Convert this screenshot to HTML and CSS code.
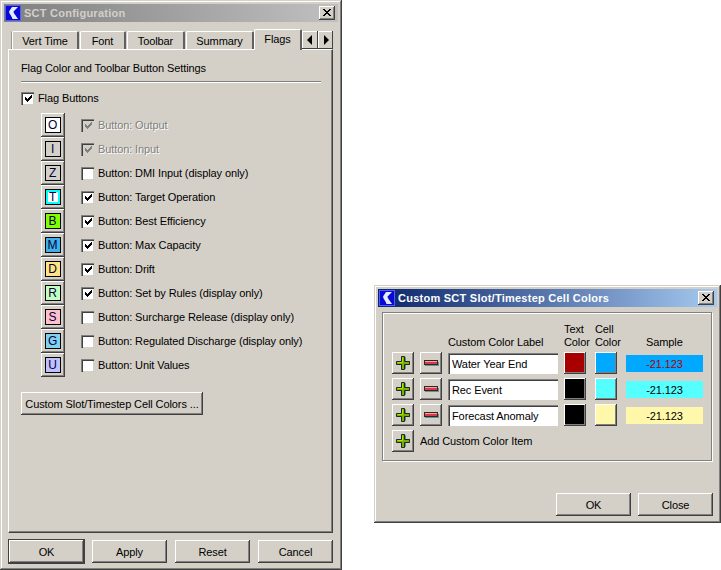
FILE: index.html
```html
<!DOCTYPE html>
<html lang="en">
<head>
<meta charset="utf-8">
<title>SCT Configuration</title>
<link rel="stylesheet" href="styles.css">
</head>
<body>
<svg class="defs" width="0" height="0" aria-hidden="true">
  <symbol id="logo" viewBox="0 0 16 16">
    <rect width="16" height="16" fill="#0808d8"/>
    <rect x="0.500" y="0.500" width="15" height="15" fill="none" stroke="#5060f0"/>
    <path d="M7 2h6L8.500 6.500c0 2 2.500 4 4.500 7.500H7.500C7 11 4 9 4 6.500z" fill="#e4ecff"/>
  </symbol>
  <symbol id="check" viewBox="0 0 9 9">
    <path d="M1 3h1v1h1v1h1V4h1V3h1V2h1V1h1v3H7v1H6v1H5v1H4v1H3V7H2V6H1z" fill="currentColor" shape-rendering="crispEdges"/>
  </symbol>
  <symbol id="close" viewBox="0 0 10 10">
    <path d="M1 1l7 7M8 1L1 8M2 1l7 7M9 1L2 8" stroke="#000" stroke-width="1" fill="none"/>
  </symbol>
  <symbol id="plus" viewBox="0 0 18 18">
    <path d="M8.500 3.500h3v4h4v3h-4v4h-3v-4h-4v-3h4z" fill="#5a8c8c" stroke="#5a8c8c"/>
    <path d="M7.500 2.500h3v5h5v3h-5v5h-3v-5h-5v-3h5z" fill="#7ab000" stroke="#1c2a20" stroke-width="1"/>
    <path d="M8.500 3.500v5h-5" fill="none" stroke="#b0e800" stroke-width="1"/>
  </symbol>
  <symbol id="minus" viewBox="0 0 18 18">
    <rect x="3" y="8" width="14" height="4" fill="#6a9090"/>
    <rect x="2.500" y="6.500" width="13" height="4" fill="#e03840" stroke="#282830" stroke-width="1"/>
    <rect x="3" y="7" width="12" height="1" fill="#ffa0a0"/>
  </symbol>
  <symbol id="left" viewBox="0 0 8 10"><path d="M6 0v10L1 5z" fill="#000"/></symbol>
  <symbol id="right" viewBox="0 0 8 10"><path d="M2 0v10l5-5z" fill="#000"/></symbol>
</svg>

<section class="window config">
  <header class="titlebar inactive">
    <svg class="logo"><use href="#logo"/></svg>
    <span class="title">SCT Configuration</span>
    <button class="close"><svg><use href="#close"/></svg></button>
  </header>
  <div class="tabstrip">
    <span class="tab clip"></span>
    <span class="tab vert">Vert Time</span>
    <span class="tab font">Font</span>
    <span class="tab toolbar">Toolbar</span>
    <span class="tab summary">Summary</span>
    <span class="tab active">Flags</span>
    <span class="arrow first"><svg><use href="#left"/></svg></span>
    <span class="arrow"><svg><use href="#right"/></svg></span>
  </div>
  <div class="pane">
    <div class="heading">Flag Color and Toolbar Button Settings</div>
    <hr class="rule">
    <label class="check-line master"><span class="box"><svg><use href="#check"/></svg></span>Flag Buttons</label>
    <div class="flags">
      <div class="flag"><span class="fbtn"><span class="swatch c-o">O</span></span><label class="check-line off"><span class="box"><svg><use href="#check"/></svg></span>Button: Output</label></div>
      <div class="flag"><span class="fbtn"><span class="swatch c-i">I</span></span><label class="check-line off"><span class="box"><svg><use href="#check"/></svg></span>Button: Input</label></div>
      <div class="flag"><span class="fbtn"><span class="swatch c-z">Z</span></span><label class="check-line"><span class="box"></span>Button: DMI Input (display only)</label></div>
      <div class="flag"><span class="fbtn"><span class="swatch c-t">T</span></span><label class="check-line"><span class="box"><svg><use href="#check"/></svg></span>Button: Target Operation</label></div>
      <div class="flag"><span class="fbtn"><span class="swatch c-b">B</span></span><label class="check-line"><span class="box"><svg><use href="#check"/></svg></span>Button: Best Efficiency</label></div>
      <div class="flag"><span class="fbtn"><span class="swatch c-m">M</span></span><label class="check-line"><span class="box"><svg><use href="#check"/></svg></span>Button: Max Capacity</label></div>
      <div class="flag"><span class="fbtn"><span class="swatch c-d">D</span></span><label class="check-line"><span class="box"><svg><use href="#check"/></svg></span>Button: Drift</label></div>
      <div class="flag"><span class="fbtn"><span class="swatch c-r">R</span></span><label class="check-line"><span class="box"><svg><use href="#check"/></svg></span>Button: Set by Rules (display only)</label></div>
      <div class="flag"><span class="fbtn"><span class="swatch c-s">S</span></span><label class="check-line"><span class="box"></span>Button: Surcharge Release (display only)</label></div>
      <div class="flag"><span class="fbtn"><span class="swatch c-g">G</span></span><label class="check-line"><span class="box"></span>Button: Regulated Discharge (display only)</label></div>
      <div class="flag"><span class="fbtn"><span class="swatch c-u">U</span></span><label class="check-line"><span class="box"></span>Button: Unit Values</label></div>
    </div>
    <button class="btn custom">Custom Slot/Timestep Cell Colors ...</button>
  </div>
  <footer class="actions">
    <button class="btn wide default">OK</button>
    <button class="btn wide">Apply</button>
    <button class="btn wide">Reset</button>
    <button class="btn wide">Cancel</button>
  </footer>
</section>

<section class="window colors">
  <header class="titlebar">
    <svg class="logo"><use href="#logo"/></svg>
    <span class="title">Custom SCT Slot/Timestep Cell Colors</span>
    <button class="close"><svg><use href="#close"/></svg></button>
  </header>
  <div class="group">
    <div class="grid">
      <span class="hd hd-label">Custom Color Label</span>
      <span class="hd hd-text">Text Color</span>
      <span class="hd hd-cell">Cell Color</span>
      <span class="hd hd-sample">Sample</span>

      <button class="icon"><svg><use href="#plus"/></svg></button>
      <button class="icon"><svg><use href="#minus"/></svg></button>
      <input class="field" value="Water Year End">
      <span class="well red"></span>
      <span class="well blue"></span>
      <span class="sample s-blue">-21.123</span>

      <button class="icon"><svg><use href="#plus"/></svg></button>
      <button class="icon"><svg><use href="#minus"/></svg></button>
      <input class="field" value="Rec Event">
      <span class="well black"></span>
      <span class="well cyan"></span>
      <span class="sample s-cyan">-21.123</span>

      <button class="icon"><svg><use href="#plus"/></svg></button>
      <button class="icon"><svg><use href="#minus"/></svg></button>
      <input class="field" value="Forecast Anomaly">
      <span class="well black"></span>
      <span class="well cream"></span>
      <span class="sample s-cream">-21.123</span>

      <button class="icon"><svg><use href="#plus"/></svg></button>
      <span class="add">Add Custom Color Item</span>
    </div>
  </div>
  <footer class="colors-actions">
    <button class="btn dlg">OK</button>
    <button class="btn dlg">Close</button>
  </footer>
</section>
</body>
</html>
```
FILE: styles.css
```css
* { box-sizing: border-box; }
html, body { margin: 0; padding: 0; }
body {
  width: 721px;
  height: 570px;
  position: relative;
  overflow: hidden;
  background: #fff;
  font: 11px "Liberation Sans", Arial, sans-serif;
  letter-spacing: -0.1px;
  color: #000;
}
.defs { position: absolute; }
button { font: inherit; letter-spacing: inherit; color: inherit; padding: 0; margin: 0; }

.window {
  position: absolute;
  background: #d4d0c8;
  padding: 4px;
  display: flex;
  flex-direction: column;
  box-shadow: inset -1px -1px 0 #404040, inset 1px 1px 0 #d4d0c8, inset -2px -2px 0 #808080, inset 2px 2px 0 #fff;
}
.config { left: 0; top: 0; width: 342px; height: 570px; }
.colors { left: 374px; top: 285px; width: 347px; height: 238px; }

.titlebar {
  height: 18px;
  flex: none;
  display: flex;
  align-items: center;
  padding: 0 3px 0 1px;
  background: linear-gradient(90deg, #0a246a, #a6caf0);
  color: #fff;
  font-weight: bold;
  letter-spacing: 0.25px;
}
.titlebar.inactive { background: linear-gradient(90deg, #808080, #c0c0c0); color: #d4d0c8; }
.logo { width: 16px; height: 16px; flex: none; margin-right: 3px; }
.title { flex: 1; white-space: nowrap; }
.close {
  width: 16px;
  height: 14px;
  flex: none;
  border: 0;
  background: #d4d0c8;
  display: flex;
  align-items: center;
  justify-content: center;
  box-shadow: inset -1px -1px 0 #404040, inset 1px 1px 0 #fff, inset -2px -2px 0 #808080;
}
.close svg { width: 10px; height: 10px; }

.tabstrip {
  display: flex;
  align-items: flex-end;
  height: 27px;
  margin: 0 0 0 5px;
  flex: none;
  position: relative;
  z-index: 1;
}
.tab {
  height: 18px;
  display: flex;
  align-items: center;
  justify-content: center;
  white-space: nowrap;
  background: #d4d0c8;
  border-top: 1px solid #fff;
  border-left: 1px solid #fff;
  border-right: 2px solid #606060;
  margin-right: 1px;
  padding-top: 1px;
  border-radius: 2px 2px 0 0;
}
.clip { width: 3px; border-top: 0; border-left: 0; margin-right: 0; border-right: 1px dotted #606060; }
.vert { width: 67px; }
.font { width: 46px; }
.toolbar { width: 58px; }
.summary { width: 68px; margin-right: 0; }
.active {
  width: 48px;
  height: 21px;
  margin-bottom: -1px;
  padding: 0 0 3px;
  margin-right: 0;
}
.arrow {
  width: 15px;
  height: 18px;
  margin-bottom: 0;
  background: #d4d0c8;
  display: flex;
  align-items: center;
  justify-content: center;
  box-shadow: inset -1px -1px 0 #404040, inset 1px 1px 0 #fff;
}
.first { width: 16px; }
.arrow svg { width: 8px; height: 10px; }

.pane {
  height: 484px;
  flex: none;
  padding: 11px 12px 0;
  border-top: 1px solid #fff;
  border-left: 1px solid #fff;
  border-right: 1px solid #404040;
  border-bottom: 1px solid #404040;
  box-shadow: inset -1px -1px 0 #808080;
  margin: 0 5px 0 4px;
  display: flex;
  flex-direction: column;
}
.heading { height: 14px; line-height: 14px; }
.rule {
  width: 300px;
  height: 2px;
  margin: 6px 0 0;
  border: 0;
  border-top: 1px solid #808080;
  border-bottom: 1px solid #fff;
}
.check-line { display: flex; align-items: center; gap: 4px; white-space: nowrap; height: 14px; }
.master { margin-top: 8px; }
.box {
  width: 13px;
  height: 13px;
  flex: none;
  background: #fff;
  border-top: 1px solid #808080;
  border-left: 1px solid #808080;
  box-shadow: inset 1px 1px 0 #404040, inset -1px -1px 0 #d4d0c8;
  display: flex;
  align-items: center;
  justify-content: center;
  color: #000;
}
.box svg { width: 9px; height: 9px; }
.off { color: #808080; text-shadow: 1px 1px 0 #fff; }
.off .box { background: #d4d0c8; color: #808080; }

.flags { margin: 8px 0 0 20px; display: flex; flex-direction: column; }
.flag { display: flex; align-items: center; gap: 16px; height: 24px; }
.fbtn {
  width: 24px;
  height: 24px;
  flex: none;
  display: flex;
  align-items: center;
  justify-content: center;
  background: #d4d0c8;
  box-shadow: inset -1px -1px 0 #404040, inset 1px 1px 0 #fff, inset -2px -2px 0 #808080;
}
.swatch {
  width: 16px;
  height: 16px;
  border: 1px solid #000;
  font-size: 12px;
  line-height: 15px;
  text-align: center;
  color: #00003c;
  margin: 0 1px 1px 0;
  box-sizing: border-box;
}
.c-o { background: #fff; }
.c-i, .c-z { background: #d4d0c8; }
.c-t { background: #fff; box-shadow: inset 0 0 0 2px #00ffff; }
.c-b { background: #80ff00; }
.c-m { background: #40b0e8; }
.c-d { background: #ffe480; }
.c-r { background: #c0ffc0; }
.c-s { background: #ffc0cb; }
.c-g { background: #80d0f0; }
.c-u { background: #c0c0ff; }

.btn {
  height: 23px;
  border: 0;
  background: #d4d0c8;
  box-shadow: inset -1px -1px 0 #404040, inset 1px 1px 0 #fff, inset -2px -2px 0 #808080;
}
.custom { width: 182px; margin-top: 15px; }
.actions { display: flex; gap: 8px; margin: 7px 5px 0 4px; }
.wide { width: 75px; }
.default {
  margin-left: 1px;
  box-shadow: 0 0 0 1px #404040, inset -1px -1px 0 #404040, inset 1px 1px 0 #fff, inset -2px -2px 0 #808080;
}

.group {
  margin: 5px 5px 0 4px;
  height: 149px;
  border: 1px solid #808080;
  box-shadow: 1px 1px 0 #fff, inset 1px 1px 0 #fff;
  padding: 8px 0 0 9px;
}
.grid {
  display: grid;
  grid-template-columns: 22px 22px 110px 22px 22px 77px;
  column-gap: 6px;
  grid-template-rows: 27px repeat(4, 22px);
  row-gap: 4px;
  align-items: center;
}
.grid > :nth-child(n) { justify-self: start; }
.hd { line-height: 13px; align-self: end; margin-bottom: -1px; }
.hd-label { grid-column: 3; }
.hd-text { grid-column: 4; width: 30px; }
.hd-cell { grid-column: 5; margin-left: 3px; width: 30px; }
.hd-sample { grid-column: 6; margin-left: 26px; }
.icon, .well {
  width: 22px;
  height: 22px;
  border: 0;
  background: #d4d0c8;
  box-shadow: inset -1px -1px 0 #404040, inset 1px 1px 0 #fff, inset -2px -2px 0 #808080;
}
.icon { display: flex; align-items: center; justify-content: center; }
.icon svg { width: 18px; height: 18px; }
.field {
  width: 110px;
  height: 21px;
  font: inherit;
  letter-spacing: inherit;
  color: #000;
  background: #fff;
  padding: 2px 0 0 4px;
  border: 0;
  outline: 0;
  box-shadow: inset 1px 1px 0 #808080, inset 2px 2px 0 #404040, inset -1px -1px 0 #fff;
}
.well { display: block; }
.well + .well { margin-left: 3px; }
.red { background: #a80000; }
.black { background: #000; }
.blue { background: #00a8ff; }
.cyan { background: #55ffff; }
.cream { background: #fff8aa; }
.sample {
  width: 77px;
  height: 17px;
  margin-left: 6px;
  line-height: 19px;
  text-align: center;
}
.s-blue { background: #00a8ff; color: #a80000; }
.s-cyan { background: #55ffff; }
.s-cream { background: #fff8aa; }
.add { grid-column: 2 / span 3; white-space: nowrap; }
.colors-actions { display: flex; justify-content: flex-end; gap: 7px; margin: 32px 4px 0 0; }
.dlg { width: 75px; }
```
